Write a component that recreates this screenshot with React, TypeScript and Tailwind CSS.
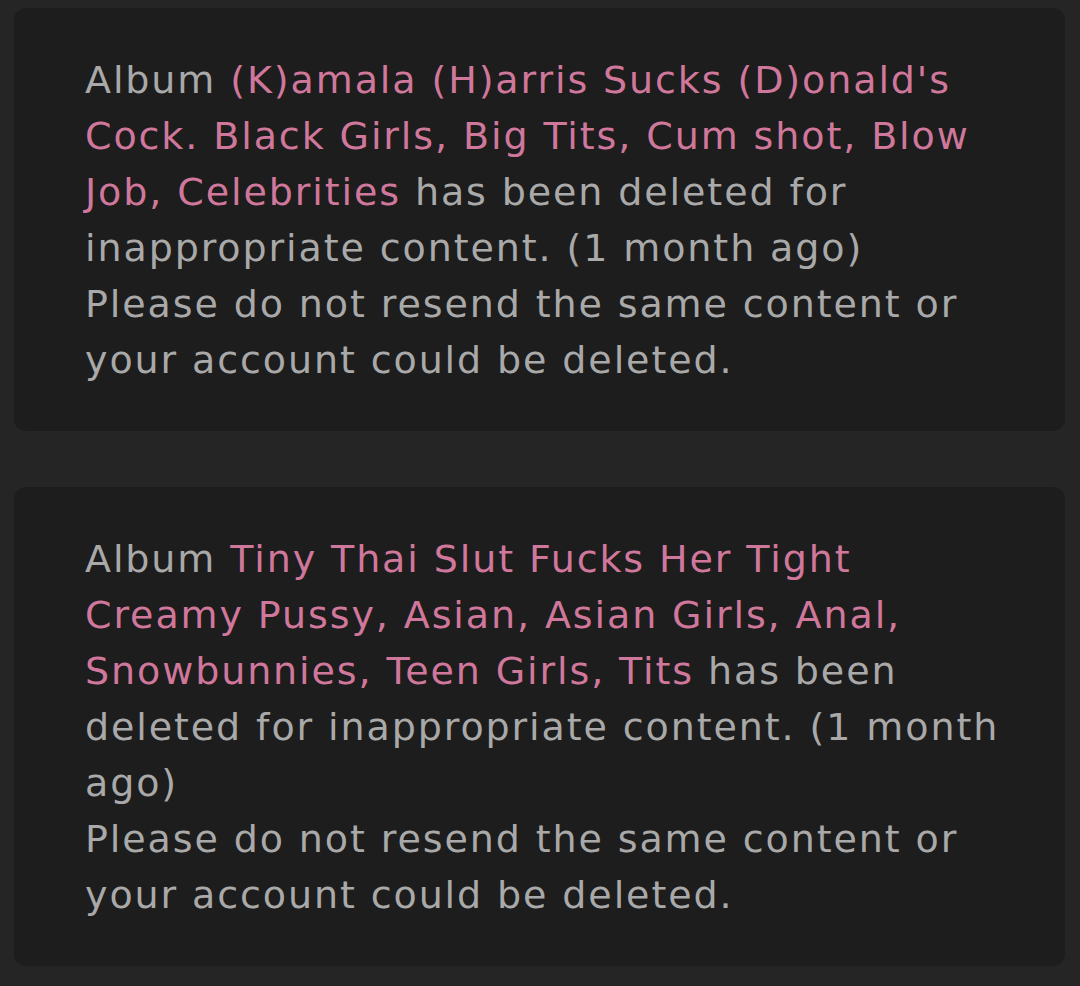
import React from 'react';

type Notice = {
  title: string;
  ago: string;
};

const notices: Notice[] = [
  {
    title: "(K)amala (H)arris Sucks (D)onald's Cock. Black Girls, Big Tits, Cum shot, Blow Job, Celebrities",
    ago: '1 month ago',
  },
  {
    title:
      'Tiny Thai Slut Fucks Her Tight Creamy Pussy, Asian, Asian Girls, Anal, Snowbunnies, Teen Girls, Tits',
    ago: '1 month ago',
  },
];

const NoticeCard = ({ title, ago }: Notice) => (
  <div className="rounded-[12px] bg-[#1d1d1d] pl-[71px] pr-[52px] pt-[44px] pb-[43px]">
    <p className="text-[38px] leading-[56px] tracking-[0.05em] text-[#a9a9a9]">
      Album <span className="text-[#d0779c]">{title}</span> has been deleted for inappropriate
      content. ({ago})
    </p>
    <p className="text-[38px] leading-[56px] tracking-[0.05em] text-[#a9a9a9]">
      Please do not resend the same content or your account could be deleted.
    </p>
  </div>
);

export default function App() {
  return (
    <div
      className="min-h-[986px] w-[1080px] bg-[#252525] pl-[14px] pr-[15px] pt-[8px] pb-[21px]"
      style={{ fontFamily: '"DejaVu Sans", "Noto Sans", sans-serif' }}
    >
      <div className="flex flex-col gap-[56px]">
        {notices.map((n, i) => (
          <NoticeCard key={i} {...n} />
        ))}
      </div>
    </div>
  );
}
